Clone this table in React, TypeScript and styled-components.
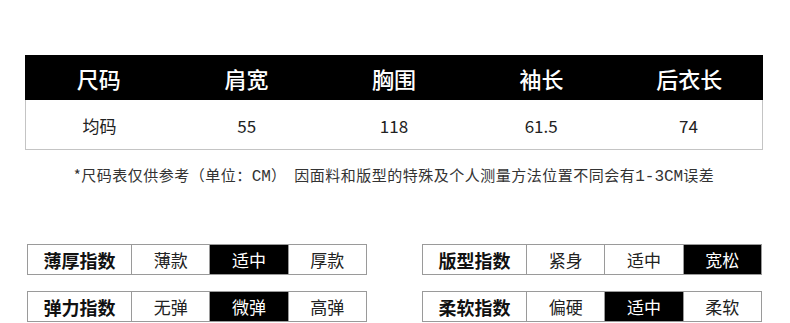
import styled, { createGlobalStyle } from 'styled-components'

const GlobalStyle = createGlobalStyle`
  html, body {
    margin: 0;
    padding: 0;
    background: #fff;
  }
  body {
    font-family: "Noto Sans CJK SC", "Noto Sans", sans-serif;
    color: #333;
  }
`

const Page = styled.div`
  width: 790px;
  height: 323px;
  padding-top: 55px;
  box-sizing: border-box;
  overflow: hidden;
`

const SizeTable = styled.div`
  width: 738px;
  margin-left: 25px;
`

const HeadRow = styled.div`
  display: grid;
  grid-template-columns: repeat(5, 1fr);
  height: 45px;
  background: #000;
`

const HeadCell = styled.div`
  display: flex;
  align-items: center;
  justify-content: center;
  color: #fff;
  font-size: 22px;
  font-weight: 500;
`

const BodyRow = styled.div`
  display: grid;
  grid-template-columns: repeat(5, 1fr);
  height: 50px;
  border: 1px solid #c4c4c4;
  border-top: none;
  box-sizing: border-box;
`

const BodyCell = styled.div`
  display: flex;
  align-items: center;
  justify-content: center;
  font-size: 17px;
  color: #222;
  padding-top: 1px;
`

const Note = styled.div`
  margin-top: 15px;
  height: 20px;
  line-height: 20px;
  font-size: 15px;
  letter-spacing: 0.5px;
  color: #333;
  text-align: center;
  padding-right: 2px;
  white-space: pre;
`

const Latin = styled.span`
  font-family: "Liberation Mono", "DejaVu Sans Mono", monospace;
  font-size: 16px;
  letter-spacing: 0;
`

const IndexArea = styled.div`
  display: flex;
  flex-direction: column;
  gap: 16px;
  margin-top: 59px;
  padding: 0 28px 0 27px;
`

const IndexLine = styled.div`
  display: flex;
  justify-content: space-between;
`

const IndexBox = styled.div`
  display: grid;
  grid-template-columns: 103px repeat(3, 1fr);
  width: 340px;
  height: 31px;
  border: 1px solid #9a9a9a;
  box-sizing: border-box;
`

const IndexLabel = styled.div`
  display: flex;
  align-items: center;
  justify-content: center;
  font-size: 18px;
  font-weight: 700;
  color: #111;
`

const IndexOption = styled.div<{ $active: boolean }>`
  display: flex;
  align-items: center;
  justify-content: center;
  font-size: 17px;
  border-left: 1px solid #9a9a9a;
  background: ${(p) => (p.$active ? '#000' : '#fff')};
  color: ${(p) => (p.$active ? '#fff' : '#222')};
`

const heads = ['尺码', '肩宽', '胸围', '袖长', '后衣长']
const values = ['均码', '55', '118', '61.5', '74']

const indexes = [
  [
    { label: '薄厚指数', options: ['薄款', '适中', '厚款'], active: 1 },
    { label: '版型指数', options: ['紧身', '适中', '宽松'], active: 2 },
  ],
  [
    { label: '弹力指数', options: ['无弹', '微弹', '高弹'], active: 1 },
    { label: '柔软指数', options: ['偏硬', '适中', '柔软'], active: 1 },
  ],
]

export default function App() {
  return (
    <Page>
      <GlobalStyle />
      <SizeTable>
        <HeadRow>
          {heads.map((h) => (
            <HeadCell key={h}>{h}</HeadCell>
          ))}
        </HeadRow>
        <BodyRow>
          {values.map((v) => (
            <BodyCell key={v}>{v}</BodyCell>
          ))}
        </BodyRow>
      </SizeTable>
      <Note>
        *尺码表仅供参考（单位：<Latin>CM</Latin>）  因面料和版型的特殊及个人测量方法位置不同会有<Latin>1-3CM</Latin>误差
      </Note>
      <IndexArea>
        {indexes.map((line, i) => (
          <IndexLine key={i}>
            {line.map((item) => (
              <IndexBox key={item.label}>
                <IndexLabel>{item.label}</IndexLabel>
                {item.options.map((o, j) => (
                  <IndexOption key={o} $active={j === item.active}>
                    {o}
                  </IndexOption>
                ))}
              </IndexBox>
            ))}
          </IndexLine>
        ))}
      </IndexArea>
    </Page>
  )
}
